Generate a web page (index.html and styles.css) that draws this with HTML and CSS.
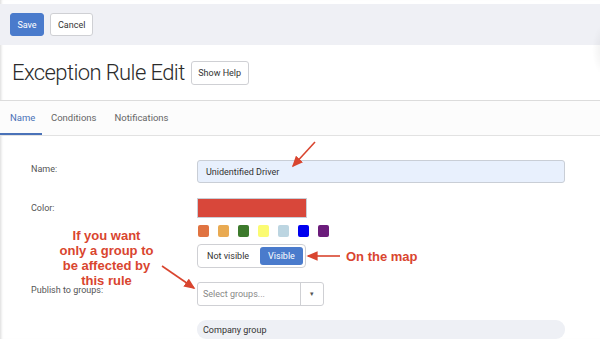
FILE: index.html
```html
<!DOCTYPE html>
<html>
<head>
    <meta charset='utf-8'>
    <title>Exception Rule Edit</title>
    <meta name='viewport' content='width=device-width, initial-scale=1'>
    <link rel="stylesheet" href="styles.css">
</head>
<body>
<div class="page">
    <div class="toolbar">
        <button class="btn btn-primary">Save</button>
        <button class="btn">Cancel</button>
    </div>
    <div class="title-row">
        <h1>Exception Rule Edit</h1>
        <button class="btn btn-help">Show Help</button>
    </div>
    <nav class="tabs">
        <a class="tab active">Name</a>
        <a class="tab">Conditions</a>
        <a class="tab">Notifications</a>
    </nav>
    <section class="form">
        <div class="field field-name">
            <label>Name:</label>
            <div class="control">
                <div class="input">Unidentified Driver</div>
            </div>
        </div>
        <div class="field field-color">
            <label>Color:</label>
            <div class="control">
                <div class="color-bar"></div>
                <div class="swatches">
                    <span class="swatch" style="background:#e07341"></span>
                    <span class="swatch" style="background:#e9aa52"></span>
                    <span class="swatch" style="background:#3d7a2c"></span>
                    <span class="swatch" style="background:#fbfb72"></span>
                    <span class="swatch" style="background:#bcd5e1"></span>
                    <span class="swatch" style="background:#0000ef"></span>
                    <span class="swatch" style="background:#6b1c7b"></span>
                </div>
                <div class="toggle">
                    <span class="opt">Not visible</span>
                    <span class="opt on">Visible</span>
                </div>
            </div>
        </div>
        <div class="field field-groups">
            <label>Publish to groups:</label>
            <div class="control">
                <div class="select">
                    <span class="placeholder">Select groups...</span>
                    <span class="caret">&#9662;</span>
                </div>
            </div>
        </div>
        <div class="field field-pill">
            <label></label>
            <div class="control">
                <div class="pill">Company group</div>
            </div>
        </div>
    </section>

    <!-- annotations drawn over the form -->
    <div class="edge-shadow"></div>
    <div class="note note-groups">If you want<br>only a group to<br>be affected by<br>this rule</div>
    <div class="note note-map">On the map</div>
    <svg class="arrows" width="600" height="339" viewBox="0 0 600 339">
        <defs>
            <marker id="head" markerWidth="7" markerHeight="6" refX="6" refY="3" orient="auto" markerUnits="strokeWidth">
                <path d="M0,0 L7,3 L0,6 Z" fill="#d9452f"/>
            </marker>
        </defs>
        <line x1="315" y1="142" x2="293" y2="166" stroke="#d9452f" stroke-width="1.6" marker-end="url(#head)"/>
        <line x1="162" y1="266" x2="194" y2="288" stroke="#d9452f" stroke-width="1.6" marker-end="url(#head)"/>
        <line x1="340" y1="256" x2="308" y2="256" stroke="#d9452f" stroke-width="1.6" marker-end="url(#head)"/>
    </svg>
</div>
</body>
</html>
```
FILE: styles.css
```css
* {
    font-family: Roboto, "Liberation Sans", sans-serif;
    box-sizing: border-box;
}

html, body {
    margin: 0;
    padding: 0;
    background: #fff;
}

.page {
    position: relative;
    width: 600px;
    height: 339px;
    overflow: hidden;
    padding-top: 4px;
    box-shadow: inset 3px 0 3px -2px #d8d8d8;
}

.toolbar {
    height: 41px;
    background: #eff0f5;
    display: flex;
    align-items: center;
    gap: 6px;
    padding-left: 10px;
}

.btn {
    height: 23px;
    padding: 0 7px;
    font-size: 9px;
    color: #333;
    background: #fff;
    border: 1px solid #cfd0d4;
    border-radius: 3px;
}

.btn-primary {
    background: #4a7bcc;
    border-color: #4a7bcc;
    color: #fff;
    width: 34px;
    padding: 0;
}

.title-row {
    height: 56px;
    display: flex;
    align-items: center;
    gap: 6px;
    padding-left: 12px;
    border-bottom: 1px solid #dcdcdc;
}

h1 {
    margin: 0;
    font-size: 22px;
    font-weight: 300;
    color: #2b2b2b;
    letter-spacing: -0.6px;
}

.btn-help {
    height: 24px;
    width: 58px;
    padding: 0;
    font-size: 9px;
}

.tabs {
    height: 35px;
    display: flex;
    background: #fcfcfc;
    border-bottom: 1px solid #e2e2e2;
}

.tab {
    font-size: 9.5px;
    color: #666;
    padding: 0 9px;
    display: flex;
    align-items: center;
    border-bottom: 2px solid transparent;
}

.tab.active {
    color: #4a72b8;
    border-bottom-color: #4a72b8;
    width: 42px;
    padding-left: 10px;
}

.form {
    padding: 24px 0 0 31px;
}

.field {
    display: flex;
}

.field label {
    width: 166px;
    font-size: 9px;
    color: #555;
}

.control {
    width: 368px;
}

.field-name label {
    padding-top: 4px;
}

.input {
    height: 23px;
    background: #e8f0fd;
    border: 1px solid #c9ced6;
    border-radius: 3px;
    font-size: 9px;
    color: #333;
    padding-left: 8px;
    display: flex;
    align-items: center;
}

.field-color {
    margin-top: 15px;
}

.field-color label {
    padding-top: 5px;
}

.color-bar {
    width: 110px;
    height: 20px;
    background: #d8473a;
    border: 1px solid #c9ced6;
}

.swatches {
    display: flex;
    gap: 9px;
    margin-top: 7px;
    padding-left: 1px;
}

.swatch {
    width: 11px;
    height: 12px;
    border-radius: 2px;
}

.toggle {
    margin-top: 7px;
    width: 109px;
    height: 24px;
    border: 1px solid #cfd0d4;
    border-radius: 4px;
    display: flex;
    align-items: center;
    padding: 0 2px 0 9px;
    justify-content: space-between;
}

.opt {
    font-size: 9px;
    color: #333;
}

.opt.on {
    background: #4a7bcc;
    color: #fff;
    height: 18px;
    width: 43px;
    border-radius: 3px;
    display: flex;
    align-items: center;
    justify-content: center;
}

.field-groups {
    margin-top: 14px;
}

.field-groups label {
    padding-top: 3px;
}

.select {
    width: 127px;
    height: 24px;
    border: 1px solid #cfd0d4;
    border-radius: 3px;
    display: flex;
    align-items: center;
}

.placeholder {
    width: 103px;
    height: 100%;
    display: flex;
    align-items: center;
    padding-left: 5px;
    font-size: 9px;
    color: #888;
    border-right: 1px solid #cfd0d4;
}

.caret {
    flex: 1;
    text-align: center;
    font-size: 7px;
    color: #555;
}

.field-pill {
    margin-top: 14px;
}

.pill {
    height: 19px;
    background: #eef0f5;
    border-radius: 9px;
    font-size: 9px;
    color: #333;
    padding-left: 6px;
    display: flex;
    align-items: center;
}

.edge-shadow {
    position: absolute;
    right: -14px;
    top: 25px;
    width: 22px;
    height: 50px;
    border-radius: 50%;
    background: radial-gradient(closest-side, rgba(0, 0, 0, 0.06), rgba(0, 0, 0, 0));
}

.note {
    position: absolute;
    font-family: "Liberation Sans", Arial, sans-serif;
    font-weight: bold;
    color: #d9452f;
}

.note-groups {
    left: 40px;
    top: 228px;
    width: 133px;
    text-align: center;
    font-size: 13px;
    line-height: 15px;
}

.note-map {
    left: 346px;
    top: 249px;
    font-size: 13px;
}

.arrows {
    position: absolute;
    left: 0;
    top: 0;
    pointer-events: none;
}
```
